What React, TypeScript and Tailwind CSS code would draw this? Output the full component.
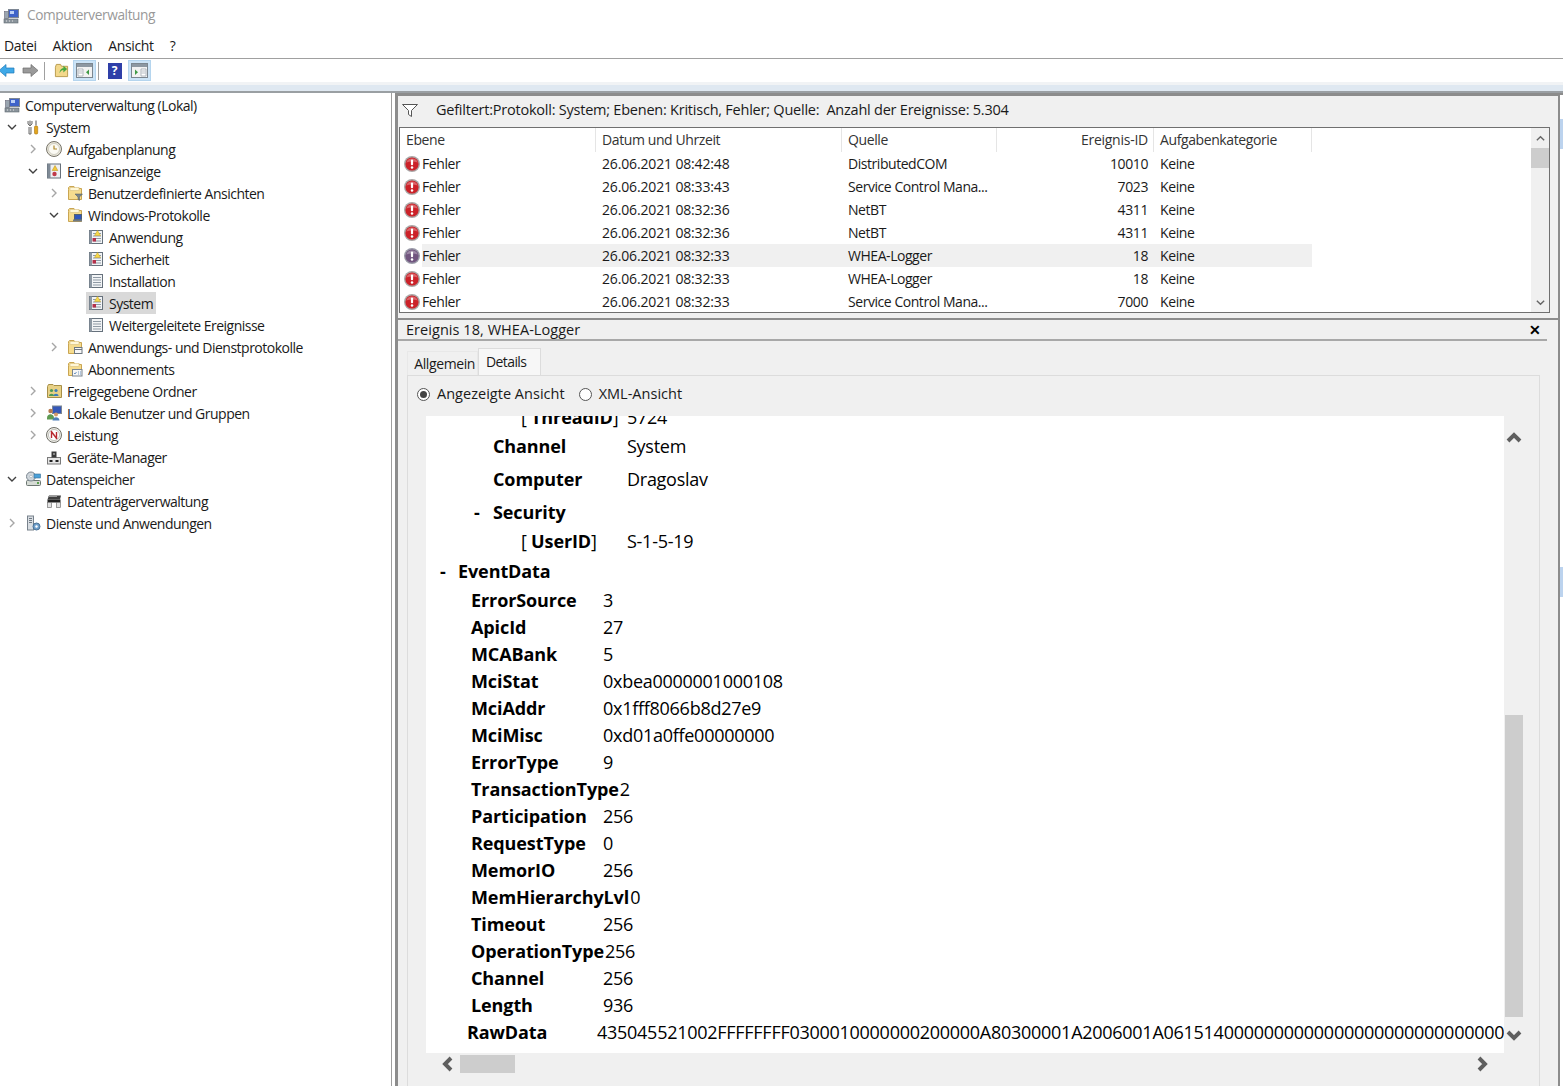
import React from 'react';

type IconName =
  | 'computer' | 'tools' | 'clock' | 'eventbook' | 'folderFilter' | 'folderLog' | 'logAlert' | 'log'
  | 'folderPlain' | 'folderSub' | 'share' | 'users' | 'perf' | 'device' | 'storage' | 'disk' | 'services';

const Folder = () => (
  <>
    <path d="M1.5 4.5V14.5H14.5V3.5H8L7 1.5H2.5L1.5 2.5Z" fill="#f6dc8f" stroke="#c9a552" />
    <rect x="3" y="2.5" width="9" height="3" fill="#fff7d8" stroke="#d8bf7c" strokeWidth="0.6" />
  </>
);

const TreeIcon = ({ name }: { name: IconName }) => {
  let body: React.ReactNode = null;
  switch (name) {
    case 'computer':
      body = (
        <>
          <rect x="5.5" y="1.5" width="10" height="8" fill="#3f63c9" stroke="#7d8794" />
          <path d="M7 3h4v3H7z" fill="#bcd0f5" />
          <rect x="1.5" y="3.5" width="4" height="7" fill="#9aa5b0" stroke="#667" strokeWidth="0.6" />
          <rect x="1" y="11" width="14" height="4" fill="#8b949c" stroke="#5f6870" strokeWidth="0.6" />
          <path d="M3 13h1M6 13h1M9 13h1" stroke="#e6e6e6" />
        </>
      );
      break;
    case 'tools':
      body = (
        <>
          <path d="M5 1.5V7M3 2v3l2 2 2-2V2M4 8v7h2V8" fill="#e8e8e8" stroke="#6d6d6d" />
          <path d="M11 1.5v5" stroke="#8a8a8a" strokeWidth="1.5" />
          <rect x="9.5" y="7" width="3.2" height="8" rx="1" fill="#e3a51e" stroke="#a8740d" strokeWidth="0.6" />
        </>
      );
      break;
    case 'clock':
      body = (
        <>
          <circle cx="8" cy="8" r="7.5" fill="#e9e6da" stroke="#77746a" />
          <circle cx="8" cy="8" r="5.5" fill="#fbfaf4" stroke="#bbb8aa" strokeWidth="0.6" />
          <path d="M8 4.5V8H11" fill="none" stroke="#b08a2c" strokeWidth="1.2" />
        </>
      );
      break;
    case 'eventbook':
      body = (
        <>
          <rect x="1.5" y="1" width="13" height="14" fill="#eef0f3" stroke="#67707a" />
          <path d="M1.5 1h3v14h-3z" fill="#7f8a96" />
          <path d="M9 2.5l2.8 5h-5.6z" fill="#f3c93a" stroke="#b68a12" strokeWidth="0.5" />
          <circle cx="8.5" cy="11" r="2.2" fill="#c0394a" />
        </>
      );
      break;
    case 'folderFilter':
      body = (
        <>
          <Folder />
          <path d="M8 9h7.5l-3 3v3.5l-1.5-1V12z" fill="#7c868c" stroke="#4f585e" strokeWidth="0.5" />
        </>
      );
      break;
    case 'folderLog':
      body = (
        <>
          <Folder />
          <rect x="7.5" y="7.5" width="7" height="5" fill="#2f57bd" stroke="#53606e" />
          <rect x="6" y="12.5" width="9" height="2" fill="#6f7a85" />
        </>
      );
      break;
    case 'logAlert':
    case 'log':
      body = (
        <>
          <rect x="1.5" y="1.5" width="13" height="13" fill="#f2f4f6" stroke="#66717c" />
          <path d="M1.5 1.5h2.5v13H1.5z" fill="#8d98a3" />
          <path d="M5 4.5h8M5 7h8M5 9.5h8M5 12h8" stroke="#8f9aa5" />
          {name === 'logAlert' && (
            <>
              <path d="M9.5 1.5l3 5h-6z" fill="#f6d84a" stroke="#c39d1a" strokeWidth="0.5" />
              <rect x="4.5" y="9" width="3.5" height="3.5" fill="#b5304a" />
            </>
          )}
        </>
      );
      break;
    case 'folderPlain':
      body = (
        <>
          <Folder />
          <rect x="7.5" y="8.5" width="7.5" height="6" fill="#f7f7f7" stroke="#6d7780" />
          <path d="M7.5 10.5H15" stroke="#6d7780" />
        </>
      );
      break;
    case 'folderSub':
      body = (
        <>
          <Folder />
          <rect x="5.5" y="8.5" width="9.5" height="6.5" fill="#f7f7f7" stroke="#7a8590" />
          <path d="M7 12l1 1 1.5-2M11 11h1M13 11h1M11 13h1M13 13h1" stroke="#4f7fb5" fill="none" strokeWidth="0.8" />
        </>
      );
      break;
    case 'share':
      body = (
        <>
          <path d="M1.5 3.5V14.5H15.5V2.5H8L7 1.5H2.5Z" fill="#e8d186" stroke="#a78f48" />
          <circle cx="5.5" cy="7.5" r="1.6" fill="#4f9a55" />
          <path d="M3 13c0-3 5-3 5 0z" fill="#4f9a55" />
          <circle cx="10" cy="7.5" r="1.6" fill="#3c7db8" />
          <path d="M7.5 13c0-3 5-3 5 0z" fill="#3c7db8" />
        </>
      );
      break;
    case 'users':
      body = (
        <>
          <rect x="6.5" y="1" width="9" height="7.5" fill="#3558b8" stroke="#7d8794" />
          <circle cx="4.5" cy="6" r="2.2" fill="#b67a4f" />
          <path d="M1 13c0-5 7-5 7 0v1.5H1z" fill="#5e9a52" />
          <circle cx="10" cy="9.5" r="2" fill="#d49a6a" />
          <path d="M6.5 15.5c0-4.5 7-4.5 7 0z" fill="#4c7fb8" />
        </>
      );
      break;
    case 'perf':
      body = (
        <>
          <circle cx="8" cy="8" r="7.5" fill="#efeee8" stroke="#6f6f68" />
          <circle cx="8" cy="8" r="5.5" fill="#fff" stroke="#9d9d96" strokeWidth="0.6" />
          <path d="M5 4l6 8M5.5 11V5M10.5 11V5" stroke="#b7282e" strokeWidth="1.4" fill="none" />
        </>
      );
      break;
    case 'device':
      body = (
        <>
          <rect x="1.5" y="8.5" width="13" height="6.5" fill="#e6e6e6" stroke="#7a7a7a" />
          <path d="M5.5 8.5V2.5H10.5V8.5z" fill="#3a3a3a" />
          <rect x="7" y="4" width="2" height="2" fill="#888" />
          <rect x="3.5" y="11" width="3" height="2" fill="#222" />
          <rect x="9.5" y="11" width="3" height="2" fill="#222" />
        </>
      );
      break;
    case 'storage':
      body = (
        <>
          <rect x="1.5" y="9.5" width="14" height="5" rx="1" fill="#d6dbd5" stroke="#6c7672" />
          <circle cx="6" cy="5.5" r="4.5" fill="#cfd6dc" stroke="#7a858f" />
          <circle cx="6" cy="5.5" r="1.3" fill="#fff" stroke="#8a949d" strokeWidth="0.5" />
          <rect x="9" y="3" width="6.5" height="4" fill="#4aa0d8" stroke="#3b6f94" strokeWidth="0.6" />
          <rect x="12" y="11" width="2" height="2" fill="#5aa04e" />
        </>
      );
      break;
    case 'disk':
      body = (
        <>
          <path d="M3 2.5H15L14 6.5H1.5z" fill="#3f3f3f" />
          <rect x="1.5" y="6.5" width="13" height="3" fill="#222" />
          <rect x="1.5" y="9.5" width="4" height="5" fill="#e3e3e3" stroke="#777" strokeWidth="0.7" />
          <rect x="10.5" y="9.5" width="4" height="5" fill="#e3e3e3" stroke="#777" strokeWidth="0.7" />
          <path d="M2 3.5h9" stroke="#9a9a9a" />
        </>
      );
      break;
    case 'services':
      body = (
        <>
          <rect x="2.5" y="1" width="6" height="14" fill="#d8dde2" stroke="#78828c" />
          <path d="M4 3.5h3M4 5.5h3M4 7.5h3" stroke="#6e7882" />
          <circle cx="11.5" cy="11.5" r="3.5" fill="#6e9fcb" stroke="#4a7195" />
          <circle cx="11.5" cy="11.5" r="1.2" fill="#fff" />
        </>
      );
      break;
  }
  return (
    <svg width="16" height="16" viewBox="0 0 16 16" className="shrink-0">
      {body}
    </svg>
  );
};

type TreeRow = { level: number; open?: boolean; icon: IconName; label: string; selected?: boolean };

const treeRows: TreeRow[] = [
  { level: 0, icon: 'computer', label: 'Computerverwaltung (Lokal)' },
  { level: 1, open: true, icon: 'tools', label: 'System' },
  { level: 2, open: false, icon: 'clock', label: 'Aufgabenplanung' },
  { level: 2, open: true, icon: 'eventbook', label: 'Ereignisanzeige' },
  { level: 3, open: false, icon: 'folderFilter', label: 'Benutzerdefinierte Ansichten' },
  { level: 3, open: true, icon: 'folderLog', label: 'Windows-Protokolle' },
  { level: 4, icon: 'logAlert', label: 'Anwendung' },
  { level: 4, icon: 'logAlert', label: 'Sicherheit' },
  { level: 4, icon: 'log', label: 'Installation' },
  { level: 4, icon: 'logAlert', label: 'System', selected: true },
  { level: 4, icon: 'log', label: 'Weitergeleitete Ereignisse' },
  { level: 3, open: false, icon: 'folderPlain', label: 'Anwendungs- und Dienstprotokolle' },
  { level: 3, icon: 'folderSub', label: 'Abonnements' },
  { level: 2, open: false, icon: 'share', label: 'Freigegebene Ordner' },
  { level: 2, open: false, icon: 'users', label: 'Lokale Benutzer und Gruppen' },
  { level: 2, open: false, icon: 'perf', label: 'Leistung' },
  { level: 2, icon: 'device', label: 'Geräte-Manager' },
  { level: 1, open: true, icon: 'storage', label: 'Datenspeicher' },
  { level: 2, icon: 'disk', label: 'Datenträgerverwaltung' },
  { level: 1, open: false, icon: 'services', label: 'Dienste und Anwendungen' },
];

const events = [
  ['26.06.2021 08:42:48', 'DistributedCOM', '10010'],
  ['26.06.2021 08:33:43', 'Service Control Mana...', '7023'],
  ['26.06.2021 08:32:36', 'NetBT', '4311'],
  ['26.06.2021 08:32:36', 'NetBT', '4311'],
  ['26.06.2021 08:32:33', 'WHEA-Logger', '18'],
  ['26.06.2021 08:32:33', 'WHEA-Logger', '18'],
  ['26.06.2021 08:32:33', 'Service Control Mana...', '7000'],
];

const eventData = [
  ['ErrorSource', '3'],
  ['ApicId', '27'],
  ['MCABank', '5'],
  ['MciStat', '0xbea0000001000108'],
  ['MciAddr', '0x1fff8066b8d27e9'],
  ['MciMisc', '0xd01a0ffe00000000'],
  ['ErrorType', '9'],
  ['TransactionType', '2'],
  ['Participation', '256'],
  ['RequestType', '0'],
  ['MemorIO', '256'],
  ['MemHierarchyLvl', '0'],
  ['Timeout', '256'],
  ['OperationType', '256'],
  ['Channel', '256'],
  ['Length', '936'],
];

const Chevron = ({ open }: { open: boolean }) =>
  open ? (
    <svg width="12" height="12" viewBox="0 0 12 12">
      <path d="M2 4l4 4 4-4" fill="none" stroke="#404040" strokeWidth="1.4" />
    </svg>
  ) : (
    <svg width="12" height="12" viewBox="0 0 12 12">
      <path d="M4 2l4 4-4 4" fill="none" stroke="#a6a6a6" strokeWidth="1.4" />
    </svg>
  );

const ErrorIcon = ({ dim }: { dim?: boolean }) => (
  <svg width="16" height="16" viewBox="0 0 16 16" className="shrink-0">
    <circle cx="8" cy="8" r="8" fill={dim ? '#9a9aa8' : '#aaa6a6'} />
    <circle cx="8" cy="8" r="6.6" fill={dim ? '#71557f' : '#cc2229'} />
    <path d="M2.2 6.5A6.2 6.2 0 0 1 13.8 6.5Q8 4.5 2.2 6.5z" fill="#fff" opacity="0.3" />
    <rect x="6.9" y="3.5" width="2.2" height="5.8" rx="1" fill="#fff" />
    <circle cx="8" cy="11.4" r="1.25" fill="#fff" />
  </svg>
);

const WinScroll = ({ dir, big }: { dir: 'up' | 'down' | 'left' | 'right'; big?: boolean }) => {
  const d = { up: 'M2 8l4-4 4 4', down: 'M2 4l4 4 4-4', left: 'M8 2L4 6l4 4', right: 'M4 2l4 4-4 4' }[dir];
  const s = big ? 18 : 11;
  return (
    <svg width={s} height={s} viewBox="0 0 12 12">
      <path d={d} fill="none" stroke={big ? '#5f5f5f' : '#666'} strokeWidth={big ? 2.6 : 1.5} />
    </svg>
  );
};

const ToolBtn = ({ active, children }: { active?: boolean; children: React.ReactNode }) => (
  <div
    className={`flex h-[21px] w-[23px] items-center justify-center border ${
      active ? 'border-[#b5d5ee] bg-[#cce4f7]' : 'border-transparent'
    }`}
  >
    {children}
  </div>
);

const PaneIcon = ({ flip }: { flip?: boolean }) => (
  <svg width="17" height="15" viewBox="0 0 17 15">
    <rect x="0.5" y="0.5" width="16" height="14" fill="#f2f2f2" stroke="#7c8790" />
    <rect x="1" y="1" width="15" height="3" fill="#8d98a2" />
    <path d={flip ? 'M10 6h5v7h-5z' : 'M2 6h5v7H2z'} fill="#fff" stroke="#98a2ab" strokeWidth="0.7" />
    <path d={flip ? 'M4 6.5V12l3-2.8z' : 'M13 6.5V12l-3-2.8z'} fill="#3f9a45" />
    <path d={flip ? 'M10.5 8h4M10.5 10h4' : 'M2.5 8h4M2.5 10h4'} stroke="#98a2ab" strokeWidth="0.7" />
  </svg>
);

export default function App() {
  return (
    <div className="flex h-[1086px] w-[1563px] flex-col overflow-hidden bg-white font-['Open_Sans','Noto_Sans',sans-serif] text-[14px] tracking-[-0.4px] text-[#1a1a1a]">
      {/* title bar */}
      <div className="flex h-[31px] shrink-0 items-center pl-[3px] text-[#999]">
        <TreeIcon name="computer" />
        <span className="ml-[8px] text-[13.7px]">Computerverwaltung</span>
      </div>
      {/* menu */}
      <div className="flex h-[28px] shrink-0 items-center gap-[16px] border-b border-[#a0a0a0] pl-[4px] pt-[2px] text-[14px] tracking-[-0.35px]">
        <span>Datei</span>
        <span>Aktion</span>
        <span>Ansicht</span>
        <span>?</span>
      </div>
      {/* toolbar */}
      <div className="flex h-[23px] shrink-0 items-center pl-0">
        <svg width="18" height="15" viewBox="0 0 18 15" className="ml-[-2px]">
          <path d="M1 7.5L8 1.5V5H16V10H8V13.5z" fill="#3fa9e8" stroke="#1e78b8" strokeWidth="0.7" />
        </svg>
        <svg width="18" height="15" viewBox="0 0 18 15" className="ml-[5px]">
          <path d="M17 7.5L10 1.5V5H2V10H10V13.5z" fill="#9a9a9a" stroke="#6a6a6a" strokeWidth="0.7" />
        </svg>
        <div className="ml-[5px] mr-[4px] h-[18px] w-px bg-[#a0a0a0]" />
        <div className="flex w-[24px] justify-center">
          <svg width="15" height="15" viewBox="0 0 16 16">
            <path d="M1.5 4.5V14.5H14.5V3.5H8L7 1.5H2.5Z" fill="#f3d88b" stroke="#b79a4c" />
            <path d="M6 11C6 7 8 5.5 10 5.5V3l4 3.5-4 3.5V7.5C8.5 7.5 7 8.5 6 11z" fill="#46a83f" />
          </svg>
        </div>
        <ToolBtn active>
          <PaneIcon />
        </ToolBtn>
        <div className="mx-[2px] h-[18px] w-px bg-[#a0a0a0]" />
        <div className="flex w-[24px] justify-center pl-[3px]">
          <div className="flex h-[16px] w-[14px] items-center justify-center bg-[#2f3fa8] text-[12px] font-bold leading-none text-white">
            ?
          </div>
        </div>
        <div className="ml-[3px]">
          <ToolBtn active>
            <PaneIcon flip />
          </ToolBtn>
        </div>
      </div>
      {/* band below the toolbar */}
      <div className="h-[11px] shrink-0 border-b-2 border-[#9a9fa3] bg-[linear-gradient(#f1f3f5_0%,#f1f3f5_30%,#dfe8f1_30%)]" />

      <div className="flex min-h-0 flex-1">
        {/* tree */}
        <div className="w-[392px] shrink-0 border-r border-[#9e9e9e] pt-[1px] tracking-[-0.5px]">
          {treeRows.map((r, i) => (
            <div key={i} className="flex h-[22px] items-center" style={{ paddingLeft: r.level === 0 ? 4 : (r.level - 1) * 21 + 6 }}>
              {r.level > 0 && (
                <div className="flex w-[12px] shrink-0 justify-center">
                  {r.open !== undefined && <Chevron open={r.open} />}
                </div>
              )}
              <div className={`flex h-[22px] items-center ${r.level > 0 && !r.selected ? 'ml-[7px]' : ''} ${r.selected ? 'ml-[5px] bg-[#d9d9d9] pl-[2px] pr-[3px]' : ''}`}>
                <TreeIcon name={r.icon} />
                <span className="ml-[5px] whitespace-nowrap">{r.label}</span>
              </div>
            </div>
          ))}
        </div>

        <div className="w-[3px] shrink-0 bg-white" />

        {/* right side */}
        <div className="flex min-w-0 flex-1 flex-col border-l-[3px] border-[#8c8c8c] bg-[#f0f0f0]">
          {/* event list */}
          <div className="flex h-[225px] shrink-0 flex-col border-t-[3px] border-[#8c8c8c] pr-[8px]">
            <div className="flex h-[31px] shrink-0 items-center pb-[3px] pl-[4px]">
              <svg width="16" height="13" viewBox="0 0 16 13">
                <path d="M0.5 0.5H15.5L9.5 6.5V12.5L6.5 10.5V6.5z" fill="#fff" stroke="#555" />
              </svg>
              <span className="ml-[18px] whitespace-nowrap text-[14.5px] tracking-[-0.23px]">Gefiltert:Protokoll: System; Ebenen: Kritisch, Fehler; Quelle:&nbsp; Anzahl der Ereignisse: 5.304</span>
            </div>
            <div className="ml-px flex h-[186px] min-h-0 border border-[#707070] bg-white">
              <div className="min-w-0 flex-1 overflow-hidden">
                <div className="grid h-[24px] grid-cols-[196px_246px_155px_157px_158px] items-center text-[#333]">
                  {['Ebene', 'Datum und Uhrzeit', 'Quelle', 'Ereignis-ID', 'Aufgabenkategorie'].map((h, i) => (
                    <div key={h} className={`flex h-[24px] items-center border-r border-[#e5e5e5] px-[6px] pb-[2px] ${i === 3 ? 'justify-end !pr-[5px] tracking-[-0.25px]' : ''}`}>
                      {h}
                    </div>
                  ))}
                </div>
                {events.map((e, i) => (
                  <div key={i} className="grid h-[23px] w-[912px] grid-cols-[196px_246px_155px_157px_158px] items-center">
                    <div className="flex items-center pl-[4px]">
                      <ErrorIcon dim={i === 4} />
                      <span className={`ml-[2px] flex-1 leading-[23px] ${i === 4 ? 'bg-[#f0f0f0]' : ''}`}>Fehler</span>
                    </div>
                    <div className={`px-[6px] leading-[23px] tracking-[-0.15px] ${i === 4 ? 'bg-[#f0f0f0]' : ''}`}>{e[0]}</div>
                    <div className={`whitespace-nowrap px-[6px] leading-[23px] tracking-[-0.45px] ${i === 4 ? 'bg-[#f0f0f0]' : ''}`}>{e[1]}</div>
                    <div className={`pr-[6px] text-right leading-[23px] ${i === 4 ? 'bg-[#f0f0f0]' : ''}`}>{e[2]}</div>
                    <div className={`px-[6px] leading-[23px] ${i === 4 ? 'bg-[#f0f0f0]' : ''}`}>Keine</div>
                  </div>
                ))}
              </div>
              <div className="flex w-[18px] shrink-0 flex-col items-center bg-[#f0f0f0]">
                <div className="flex h-[20px] items-center"><WinScroll dir="up" /></div>
                <div className="h-[20px] w-[18px] bg-[#cdcdcd]" />
                <div className="flex-1" />
                <div className="flex h-[20px] items-center"><WinScroll dir="down" /></div>
              </div>
            </div>
          </div>

          {/* event detail */}
          <div className="flex min-h-0 flex-1 flex-col border-t-2 border-[#8c8c8c] pr-[11px]">
            <div className="flex h-[21px] shrink-0 items-center justify-between border-b-[2px] border-[#a8a8a8] pl-[8px] pr-[6px]">
              <span className="text-[14.5px] tracking-[0.05px]">Ereignis 18, WHEA-Logger</span>
              <span className="text-[14px] font-bold leading-none text-black">✕</span>
            </div>
            {/* tabs */}
            <div className="ml-[9px] mt-[7px] flex h-[27px] shrink-0 items-end">
              <div className="flex h-[24px] w-[71px] items-center justify-end border border-b-0 border-[#e8e8e8] pr-[2px]">Allgemein</div>
              <div className="flex h-[27px] w-[63px] items-start border border-b-0 border-[#dcdcdc] bg-[#f7f7f7] pl-[7px] pt-[2px] tracking-[-0.6px]">Details</div>
            </div>
            <div className="ml-[9px] mr-[7px] flex min-h-0 flex-1 flex-col border border-[#dcdcdc] border-b-0">
              <div className="flex h-[40px] shrink-0 items-center pb-[4px] pl-[9px] text-[14.5px] tracking-[0.02px]">
                <div className="flex h-[13px] w-[13px] items-center justify-center rounded-full border border-[#555] bg-white">
                  <div className="h-[7px] w-[7px] rounded-full bg-[#444]" />
                </div>
                <span className="ml-[7px]">Angezeigte Ansicht</span>
                <div className="ml-[14px] h-[13px] w-[13px] rounded-full border border-[#555] bg-white" />
                <span className="ml-[7px]">XML-Ansicht</span>
              </div>
              <div className="ml-[18px] flex h-[637px] shrink-0 pr-[16px]">
                {/* rendered event XML */}
                <div className="min-w-0 flex-1 overflow-hidden bg-white text-[18px] leading-[27px] tracking-[-0.27px] text-black [&_b]:tracking-[-0.1px]">
                  <div className="mt-[-14px] flex h-[28px] items-center pl-[95px] pt-[2px]">
                    <span className="w-[106px]">[ <b>ThreadID</b>]</span>
                    <span>5724</span>
                  </div>
                  <div className="flex h-[33px] items-center pl-[67px]">
                    <b className="w-[134px]">Channel</b>
                    <span>System</span>
                  </div>
                  <div className="flex h-[33px] items-center pl-[67px]">
                    <b className="w-[134px]">Computer</b>
                    <span>Dragoslav</span>
                  </div>
                  <div className="flex h-[32px] items-center pl-[48px]">
                    <b className="w-[19px]">-</b>
                    <b>Security</b>
                  </div>
                  <div className="flex h-[27px] items-center pl-[95px]">
                    <span className="w-[106px]">[ <b>UserID</b>]</span>
                    <span>S-1-5-19</span>
                  </div>
                  <div className="flex h-[32px] items-center pl-[14px]">
                    <b className="w-[18px]">-</b>
                    <b>EventData</b>
                  </div>
                  <div>
                    {eventData.map(([k, v]) => (
                      <div key={k} className="flex h-[27px] items-center pl-[45px]">
                        <b className="min-w-[132px] shrink-0 whitespace-nowrap pr-px">{k}</b>
                        <span>{v}</span>
                      </div>
                    ))}
                  </div>
                  <div className="flex h-[27px] items-center pl-[41px]">
                    <b className="w-[130px] shrink-0">RawData</b>
                    <span className="whitespace-nowrap">435045521002FFFFFFFF0300010000000200000A80300001A2006001A061514000000000000000000000000000000000000000</span>
                  </div>
                </div>
                <div className="flex w-[19px] shrink-0 flex-col items-center">
                  <div className="flex h-[44px] items-center"><WinScroll dir="up" big /></div>
                  <div className="h-[255px]" />
                  <div className="h-[302px] w-[18px] bg-[#cdcdcd]" />
                  <div className="flex flex-1 items-center"><WinScroll dir="down" big /></div>
                </div>
              </div>
              <div className="ml-[18px] flex h-[22px] shrink-0 items-center pl-[13px]">
                <WinScroll dir="left" big />
                <div className="ml-[3px] h-[18px] w-[55px] bg-[#cdcdcd]" />
                <div className="flex-1" />
                <div className="mr-[48px]"><WinScroll dir="right" big /></div>
              </div>
            </div>
          </div>
        </div>

        {/* sliver of the action pane */}
        <div className="flex w-[5px] shrink-0 flex-col border-l-2 border-[#8c8c8c] bg-white">
          <div className="h-[2px] bg-[#8c8c8c]" />
          <div className="mt-[24px] h-[30px] bg-[#bcd3ee]" />
          <div className="mt-[418px] h-[30px] bg-[#bcd3ee]" />
        </div>
      </div>
    </div>
  );
}
